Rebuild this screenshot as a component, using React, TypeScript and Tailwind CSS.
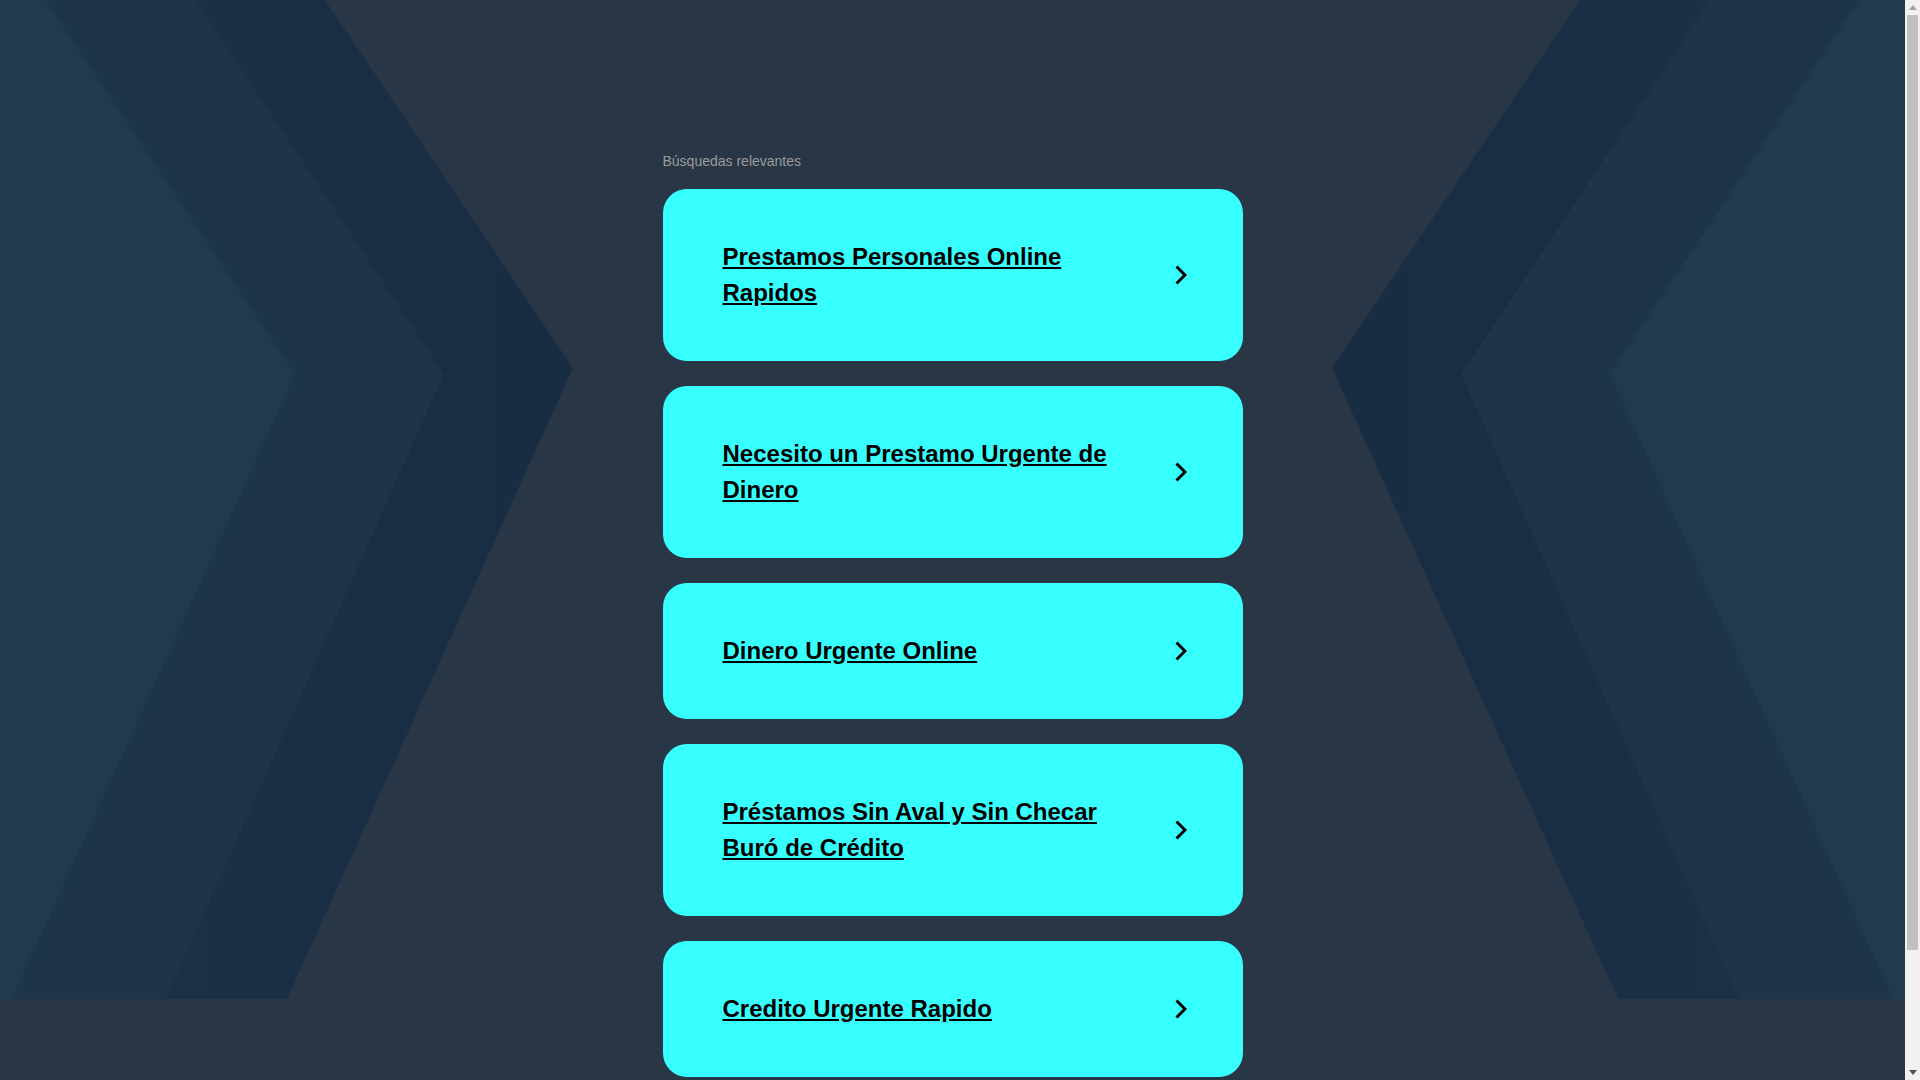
import React from 'react';

const searches: string[] = [
  'Prestamos Personales Online Rapidos',
  'Necesito un Prestamo Urgente de Dinero',
  'Dinero Urgente Online',
  'Préstamos Sin Aval y Sin Checar Buró de Crédito',
  'Credito Urgente Rapido',
];

const Chevron: React.FC = () => (
  <svg width="12" height="20" viewBox="0 0 12 20" fill="none" className="shrink-0">
    <polyline points="1.5,1.5 10,10 1.5,18.5" stroke="#000" strokeWidth="3" strokeLinejoin="miter" />
  </svg>
);

const Backdrop: React.FC = () => (
  <svg
    className="absolute left-0 top-0 w-full h-[999px]"
    viewBox="0 0 1905 999"
    preserveAspectRatio="none"
    aria-hidden="true"
  >
    <defs>
      <linearGradient id="outerL" x1="0" y1="0" x2="1" y2="0">
        <stop offset="0" stopColor="#1c3248" />
        <stop offset="1" stopColor="#182c42" />
      </linearGradient>
      <linearGradient id="outerR" x1="1" y1="0" x2="0" y2="0">
        <stop offset="0" stopColor="#1c3248" />
        <stop offset="1" stopColor="#182c42" />
      </linearGradient>
    </defs>
    {/* left side */}
    <polygon points="0,0 325,0 573,368 287,999 0,999" fill="url(#outerL)" />
    <polygon points="0,0 195,0 444,374 166,999 0,999" fill="#1d344b" />
    <polygon points="0,0 46,0 295,374 12,999 0,999" fill="#203a50" />
    {/* right side, mirrored */}
    <polygon points="1905,0 1580,0 1332,368 1618,999 1905,999" fill="url(#outerR)" />
    <polygon points="1905,0 1710,0 1461,374 1739,999 1905,999" fill="#1d344b" />
    <polygon points="1905,0 1859,0 1610,374 1893,999 1905,999" fill="#203a50" />
  </svg>
);

// classic browser scrollbar, as seen in the screenshot
const Scrollbar: React.FC = () => (
  <div className="flex w-[15px] shrink-0 flex-col bg-[#f1f1f1]">
    <div className="flex h-[15px] items-center justify-center">
      <svg width="8" height="5" viewBox="0 0 8 5">
        <polygon points="0,5 4,0 8,5" fill="#a3a3a3" />
      </svg>
    </div>
    <div className="flex-1 px-[2px]">
      <div className="h-[935px] bg-[#c1c1c1]" />
    </div>
    <div className="flex h-[15px] items-center justify-center">
      <svg width="8" height="5" viewBox="0 0 8 5">
        <polygon points="0,0 8,0 4,5" fill="#505050" />
      </svg>
    </div>
  </div>
);

export default function App() {
  return (
    <div className="flex h-screen overflow-hidden font-['Liberation_Sans',Arial,sans-serif]">
      <div className="relative flex-1 overflow-hidden bg-[#283646]">
        <Backdrop />
        <div className="relative mx-auto w-[580px] pt-[151px] pb-[120px]">
          <h2 className="mb-[18px] text-sm leading-5 font-normal text-[#9b9b9b]">Búsquedas relevantes</h2>
          <div className="flex flex-col gap-[25px]">
            {searches.map((s) => (
              <a
                key={s}
                href="#"
                className="flex items-center rounded-3xl bg-[#38ffff] py-[50px] pl-[60px] pr-[56px]"
              >
                <span className="flex-1 pr-[40px] text-2xl leading-9 font-bold text-black underline">
                  {s}
                </span>
                <Chevron />
              </a>
            ))}
          </div>
        </div>
      </div>
      <Scrollbar />
    </div>
  );
}
